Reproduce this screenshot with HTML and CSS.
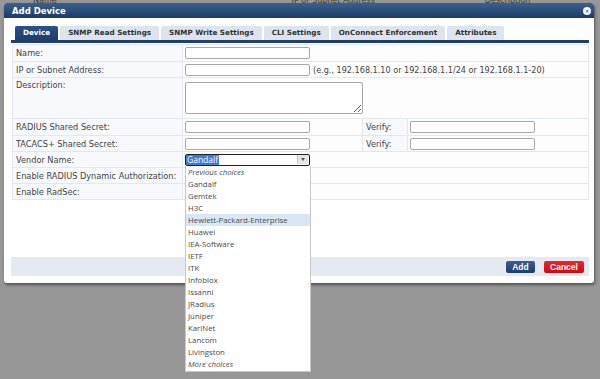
FILE: index.html
```html
<!DOCTYPE html>
<html lang="en">
<head>
  <meta charset="UTF-8">
  <title>Add Device</title>
  <link rel="stylesheet" href="styles.css">
</head>
<body>
  <div class="backdrop-head">
    <span class="bh-name">Name</span>
    <span class="bh-ip">IP or Subnet Address</span>
    <span class="bh-desc">Description</span>
  </div>

  <div class="modal">
    <div class="modal-title">
      <span>Add Device</span>
      <span class="close">&#x2715;</span>
    </div>

    <div class="modal-body">
      <ul class="tabs">
        <li class="tab active">Device</li>
        <li class="tab">SNMP Read Settings</li>
        <li class="tab">SNMP Write Settings</li>
        <li class="tab">CLI Settings</li>
        <li class="tab">OnConnect Enforcement</li>
        <li class="tab">Attributes</li>
      </ul>
      <div class="tab-line"></div>

      <table class="form">
        <colgroup>
          <col class="c-lbl">
          <col class="c-val">
          <col class="c-ver">
          <col class="c-rest">
        </colgroup>
        <tr class="r17">
          <td class="lbl">Name:</td>
          <td colspan="3"><input class="txt" type="text"></td>
        </tr>
        <tr>
          <td class="lbl">IP or Subnet Address:</td>
          <td colspan="3"><input class="txt" type="text"><span class="hint">(e.g., 192.168.1.10 or 192.168.1.1/24 or 192.168.1.1-20)</span></td>
        </tr>
        <tr class="r39">
          <td class="lbl top">Description:</td>
          <td colspan="3"><textarea class="area"></textarea></td>
        </tr>
        <tr class="r17">
          <td class="lbl">RADIUS Shared Secret:</td>
          <td><input class="txt" type="password"></td>
          <td class="lbl">Verify:</td>
          <td><input class="txt" type="password"></td>
        </tr>
        <tr>
          <td class="lbl">TACACS+ Shared Secret:</td>
          <td><input class="txt" type="password"></td>
          <td class="lbl">Verify:</td>
          <td><input class="txt" type="password"></td>
        </tr>
        <tr>
          <td class="lbl">Vendor Name:</td>
          <td colspan="3">
            <div class="combo">
              <div class="combo-box">
                <span class="combo-sel">Gandalf</span>
                <span class="combo-btn"></span>
              </div>
              <ul class="combo-list">
                <li class="note">Previous choices</li>
                <li>Gandalf</li>
                <li>Gemtek</li>
                <li>H3C</li>
                <li class="hover">Hewlett-Packard-Enterprise</li>
                <li>Huawei</li>
                <li>IEA-Software</li>
                <li>IETF</li>
                <li>ITK</li>
                <li>Infoblox</li>
                <li>Issanni</li>
                <li>JRadius</li>
                <li>Juniper</li>
                <li>KarlNet</li>
                <li>Lancom</li>
                <li>Livingston</li>
                <li class="note">More choices</li>
              </ul>
            </div>
          </td>
        </tr>
        <tr>
          <td class="lbl">Enable RADIUS Dynamic Authorization:</td>
          <td colspan="3"><span class="check"></span></td>
        </tr>
        <tr>
          <td class="lbl">Enable RadSec:</td>
          <td colspan="3"><span class="check"></span></td>
        </tr>
      </table>

      <div class="modal-foot">
        <button class="btn add" type="button">Add</button>
        <button class="btn cancel" type="button">Cancel</button>
      </div>
    </div>
  </div>
</body>
</html>
```

FILE: styles.css
```css
body {
  margin: 0;
  width: 600px;
  height: 379px;
  overflow: hidden;
  background: #979797;
  font-family: 'DejaVu Sans', Verdana, sans-serif;
  font-size: 8.2px;
  color: #444;
  position: relative;
}

.backdrop-head {
  display: flex;
  height: 7px;
  margin-top: -3px;
  font-size: 8px;
  line-height: 8px;
  color: #3c3c3c;
}

.bh-name { margin-left: 33px; }
.bh-ip { margin-left: 235px; }
.bh-desc { margin-left: 110px; }

.modal {
  position: absolute;
  left: 4px;
  top: 3px;
  width: 590px;
  height: 280px;
  background: #fff;
  border-radius: 3px;
  box-shadow: 1px 2px 3px rgba(0, 0, 0, 0.45);
  display: flex;
  flex-direction: column;
}

.modal-title {
  height: 15px;
  padding: 0 0 0 8px;
  display: flex;
  align-items: center;
  justify-content: space-between;
  background: linear-gradient(#3c6190, #1d3b66);
  border-radius: 3px 3px 0 0;
  color: #fff;
  font-weight: bold;
  font-size: 8.5px;
}

.close {
  width: 8px;
  height: 8px;
  margin-right: 3px;
  border-radius: 50%;
  background: #f2f4f7;
  color: #1d3b66;
  font-size: 5px;
  line-height: 8px;
  text-align: center;
}

.modal-body {
  flex: 1;
  display: flex;
  flex-direction: column;
  padding: 8px 5px 0 7px;
}

.tabs {
  list-style: none;
  margin: 0;
  padding: 0 0 0 4px;
  display: flex;
  gap: 2px;
  height: 14px;
}

.tab {
  padding: 0 8px;
  line-height: 14px;
  background: #dde4ee;
  color: #333;
  font-weight: bold;
  font-size: 7.2px;
  border-radius: 2px 2px 0 0;
}

.tab.active {
  background: linear-gradient(#2b5187, #1d3d6d);
  color: #fff;
}

.tab-line {
  height: 3px;
  background: #1f3f71;
}

.form {
  margin: 1px 0 0 1px;
  width: 576px;
  border-collapse: collapse;
  table-layout: fixed;
}

.c-lbl { width: 170px; }
.c-val { width: 180px; }
.c-ver { width: 45px; }
.c-rest { width: 181px; }

.form td {
  height: 15px;
  padding: 0 2px;
  border: 1px solid #e3e8ef;
  background: #fdfdfe;
  white-space: nowrap;
  vertical-align: middle;
}

.form tr.r17 td { height: 16px; }
.form tr.r39 td { height: 38px; }

.form td.lbl {
  padding-left: 3px;
  background: #f7f9fc;
}

.form td.top { vertical-align: top; padding-top: 2px; }

.txt {
  box-sizing: border-box;
  width: 125px;
  height: 12px;
  margin: 0;
  padding: 0;
  border: 1px solid #a8a8a8;
  border-radius: 2px;
  background: #fff;
  vertical-align: middle;
}

.hint {
  margin-left: 3px;
  font-size: 8.1px;
  vertical-align: middle;
}

.area {
  box-sizing: border-box;
  display: block;
  width: 178px;
  height: 32px;
  margin: 0;
  border: 1px solid #a8a8a8;
  border-radius: 2px;
  resize: both;
}

.combo {
  position: relative;
  width: 125px;
}

.combo-box {
  box-sizing: border-box;
  height: 12px;
  display: flex;
  align-items: center;
  justify-content: space-between;
  border: 1px solid #222;
  border-radius: 2px;
  background: #fff;
}

.combo-sel {
  padding: 0 1px;
  line-height: 10px;
  background: #3a7bd5;
  color: #fff;
  font-family: 'Open Sans', sans-serif;
  font-size: 8.5px;
}

.combo-btn {
  width: 10px;
  height: 9px;
  margin-right: 1px;
  background: #e4e6ea;
  border-left: 1px solid #c4c7cc;
  position: relative;
}

.combo-btn::after {
  content: "";
  position: absolute;
  left: 3px;
  top: 3px;
  border-left: 2px solid transparent;
  border-right: 2px solid transparent;
  border-top: 3px solid #555;
}

.combo-list {
  position: absolute;
  top: 12px;
  left: 0;
  width: 124px;
  margin: 0;
  padding: 0 0 1px;
  list-style: none;
  background: #fff;
  border: 1px solid #c8c8c8;
  border-top: none;
  z-index: 5;
  font-family: 'Open Sans', sans-serif;
  font-size: 7.8px;
  color: #4a4a4a;
}

.combo-list li {
  height: 12px;
  line-height: 12px;
  padding-left: 2px;
}

.combo-list li.note { font-style: italic; }
.combo-list li.hover { background: #d9e6f6; }

.check {
  display: inline-block;
  width: 8px;
  height: 8px;
  border: 1px solid #6b8fc4;
  border-radius: 1px;
  vertical-align: middle;
}

.modal-foot {
  margin: auto 0 7px;
  height: 19px;
  background: #e5e9f1;
  display: flex;
  justify-content: flex-end;
  align-items: center;
  gap: 9px;
  padding-right: 5px;
}

.btn {
  height: 12px;
  padding: 0;
  border: none;
  border-radius: 2px;
  color: #fff;
  font-family: 'Liberation Sans', Arial, sans-serif;
  font-weight: bold;
  font-size: 8.5px;
  line-height: 12px;
}

.btn.add {
  width: 29px;
  background: linear-gradient(#3b5f92, #1c3c6b);
}

.btn.cancel {
  width: 40px;
  background: linear-gradient(#f0242c, #cc0a12);
}
```
